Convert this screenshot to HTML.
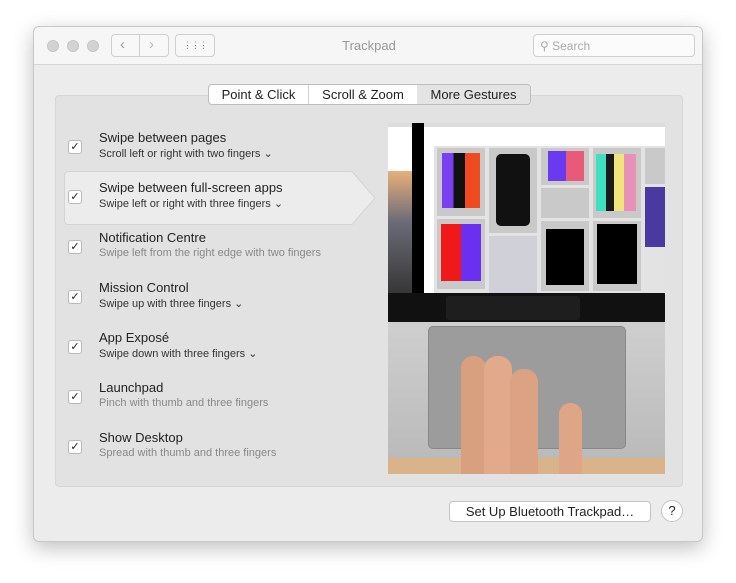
<!DOCTYPE html>
<html><head><style>
*{margin:0;padding:0;box-sizing:border-box}
body{width:736px;height:583px;background:#fff;position:relative;overflow:hidden;font-family:"Liberation Sans",sans-serif;color:#222}
.a{position:absolute}
.win{left:33px;top:26px;width:670px;height:516px;background:#ececec;border:1px solid #c8c8c8;border-radius:6px;box-shadow:0 6px 20px rgba(0,0,0,.25);overflow:hidden}
.tb{left:0;top:0;width:670px;height:38px;background:#f6f6f6;border-bottom:1px solid #d6d6d6}
.dot{width:12px;height:12px;border-radius:50%;background:#d3d3d3;top:13px;border:1px solid #c6c6c6}
.btn{border:1px solid #cfcfcf;border-radius:4px;background:#f8f8f8}
.panel{left:21px;top:68px;width:628px;height:392px;background:#e2e2e2;border:1px solid #d6d6d6;border-radius:4px}
.row .t{font-size:13px;color:#222}
.row .s{font-size:11px;color:#333;margin-top:2px}
.row .s.g{color:#888}
.cb{width:14px;height:14px;border:1px solid #b8b8b8;border-radius:3px;background:#fff;font-size:11px;line-height:12px;text-align:center;color:#222}
</style></head><body>
<div class="a win">
 <div class="a tb">
  <div class="a dot" style="left:13px"></div><div class="a dot" style="left:33px"></div><div class="a dot" style="left:53px"></div>
  <div class="a btn" style="left:77px;top:7px;width:58px;height:23px"></div>
  <div class="a" style="left:105px;top:7px;width:1px;height:23px;background:#cfcfcf"></div>
  <div class="a" style="left:86px;top:9px;font-size:15px;color:#999">&#8249;</div>
  <div class="a" style="left:115px;top:9px;font-size:15px;color:#bbb">&#8250;</div>
  <div class="a btn" style="left:141px;top:7px;width:40px;height:23px;text-align:center;font-size:9px;color:#888;line-height:21px;letter-spacing:-1px">&#8942;&#8942;&#8942;</div>
  <div class="a" style="left:0;width:670px;top:11px;text-align:center;font-size:13px;color:#999">Trackpad</div>
  <div class="a btn" style="left:499px;top:7px;width:162px;height:23px;background:#fbfbfb;font-size:12px;color:#aaa;padding:4px 0 0 6px">&#9906; Search</div>
 </div>
 <div class="a panel"></div>
 <div class="a" style="left:174px;top:57px;width:323px;height:21px;border:1px solid #bdbdbd;border-radius:4px;background:#fff;font-size:13px;display:flex;overflow:hidden">
  <div style="width:100px;text-align:center;line-height:19px;border-right:1px solid #d0d0d0">Point &amp; Click</div>
  <div style="width:108px;text-align:center;line-height:19px">Scroll &amp; Zoom</div>
  <div style="flex:1;text-align:center;line-height:19px;background:#e4e4e4">More Gestures</div>
 </div>
 <svg class="a" style="left:30px;top:144px" width="312" height="54"><path d="M4 .5H288L311 27 288 53.5H4A3.5 3.5 0 0 1 .5 50V4A3.5 3.5 0 0 1 4 .5Z" fill="#ececec" stroke="#d4d4d4"/></svg>
 <div class="a" style="left:354px;top:96px;width:277px;height:351px;background:#fff;overflow:hidden">
  <div class="a" style="left:0;top:0;width:277px;height:4px;background:#ddd"></div>
  <div class="a" style="left:0;top:48px;width:24px;height:127px;background:linear-gradient(#e8b07a,#6b6b78 40%,#333 100%)"></div>
  <div class="a" style="left:24px;top:0;width:12px;height:175px;background:#000"></div>
  <div class="a" style="left:46px;top:23px;width:232px;height:150px;background:#e3e3e3"></div>
  <div class="a" style="left:49px;top:25px;width:48px;height:68px;background:#c9c9c9"></div><div class="a" style="left:54px;top:30px;width:38px;height:55px;background:linear-gradient(90deg,#7a3ff0 30%,#111 30%,#111 60%,#f04a20 60%)"></div>
  <div class="a" style="left:101px;top:25px;width:48px;height:85px;background:#c9c9c9"></div><div class="a" style="left:108px;top:31px;width:34px;height:72px;background:#111;border-radius:5px"></div>
  <div class="a" style="left:153px;top:25px;width:48px;height:37px;background:#c9c9c9"></div><div class="a" style="left:160px;top:28px;width:36px;height:30px;background:linear-gradient(90deg,#6a3af0 50%,#e85a7a 50%)"></div>
  <div class="a" style="left:153px;top:65px;width:48px;height:30px;background:#c9c9c9"></div>
  <div class="a" style="left:205px;top:25px;width:48px;height:70px;background:#c9c9c9"></div><div class="a" style="left:208px;top:31px;width:40px;height:57px;background:linear-gradient(90deg,#3fe0c0 25%,#1a1a1a 25%,#1a1a1a 45%,#f0e47a 45%,#f0e47a 70%,#e890b8 70%)"></div>
  <div class="a" style="left:257px;top:25px;width:21px;height:36px;background:#c9c9c9"></div>
  <div class="a" style="left:257px;top:64px;width:21px;height:60px;background:#4a3aa0"></div>
  <div class="a" style="left:49px;top:96px;width:48px;height:70px;background:#c9c9c9"></div><div class="a" style="left:53px;top:101px;width:40px;height:57px;background:linear-gradient(90deg,#f01818 50%,#6a2ff0 50%)"></div>
  <div class="a" style="left:101px;top:113px;width:48px;height:60px;background:#d0d0d8"></div>
  <div class="a" style="left:153px;top:98px;width:48px;height:70px;background:#c9c9c9"></div><div class="a" style="left:158px;top:106px;width:38px;height:56px;background:#000"></div>
  <div class="a" style="left:205px;top:98px;width:48px;height:70px;background:#c9c9c9"></div><div class="a" style="left:209px;top:101px;width:40px;height:60px;background:#000"></div>
  <div class="a" style="left:0;top:170px;width:277px;height:30px;background:#111"></div>
  <div class="a" style="left:58px;top:173px;width:134px;height:24px;background:#1e1e1e;border-radius:3px"></div>
  <div class="a" style="left:0;top:199px;width:277px;height:152px;background:linear-gradient(#cfcfcf,#b8b8b8)"></div>
  <div class="a" style="left:40px;top:203px;width:198px;height:123px;background:#9c9c9c;border-radius:5px;border:1px solid #888"></div>
  <div class="a" style="left:0;top:335px;width:277px;height:16px;background:#d9b48a"></div>
  <div class="a" style="left:73px;top:233px;width:25px;height:118px;background:#d9a080;border-radius:12px 12px 0 0"></div>
  <div class="a" style="left:96px;top:233px;width:28px;height:118px;background:#e2aa8a;border-radius:13px 13px 0 0"></div>
  <div class="a" style="left:122px;top:246px;width:28px;height:105px;background:#dba383;border-radius:13px 13px 0 0"></div>
  <div class="a" style="left:171px;top:280px;width:23px;height:71px;background:#dea686;border-radius:11px 11px 0 0"></div>
 </div>
 <div class="a" style="left:34px;top:103px">
  <div class="row a" style="top:0"><div class="a cb" style="top:10px">&#10003;</div><div class="a" style="left:31px;width:300px"><div class="t">Swipe between pages</div><div class="s">Scroll left or right with two fingers &#8964;</div></div></div>
  <div class="row a" style="top:50px"><div class="a cb" style="top:10px">&#10003;</div><div class="a" style="left:31px;width:300px"><div class="t">Swipe between full-screen apps</div><div class="s">Swipe left or right with three fingers &#8964;</div></div></div>
  <div class="row a" style="top:100px"><div class="a cb" style="top:10px">&#10003;</div><div class="a" style="left:31px;width:300px"><div class="t">Notification Centre</div><div class="s g">Swipe left from the right edge with two fingers</div></div></div>
  <div class="row a" style="top:150px"><div class="a cb" style="top:10px">&#10003;</div><div class="a" style="left:31px;width:300px"><div class="t">Mission Control</div><div class="s">Swipe up with three fingers &#8964;</div></div></div>
  <div class="row a" style="top:200px"><div class="a cb" style="top:10px">&#10003;</div><div class="a" style="left:31px;width:300px"><div class="t">App Exposé</div><div class="s">Swipe down with three fingers &#8964;</div></div></div>
  <div class="row a" style="top:250px"><div class="a cb" style="top:10px">&#10003;</div><div class="a" style="left:31px;width:300px"><div class="t">Launchpad</div><div class="s g">Pinch with thumb and three fingers</div></div></div>
  <div class="row a" style="top:300px"><div class="a cb" style="top:10px">&#10003;</div><div class="a" style="left:31px;width:300px"><div class="t">Show Desktop</div><div class="s g">Spread with thumb and three fingers</div></div></div>
 </div>
 <div class="a" style="left:415px;top:474px;width:202px;height:21px;background:#fff;border:1px solid #c4c4c4;border-radius:4px;font-size:13px;text-align:center;line-height:19px">Set Up Bluetooth Trackpad…</div>
 <div class="a" style="left:627px;top:473px;width:22px;height:22px;background:#fff;border:1px solid #c4c4c4;border-radius:50%;font-size:13px;text-align:center;line-height:20px">?</div>
</div>
</body></html>
